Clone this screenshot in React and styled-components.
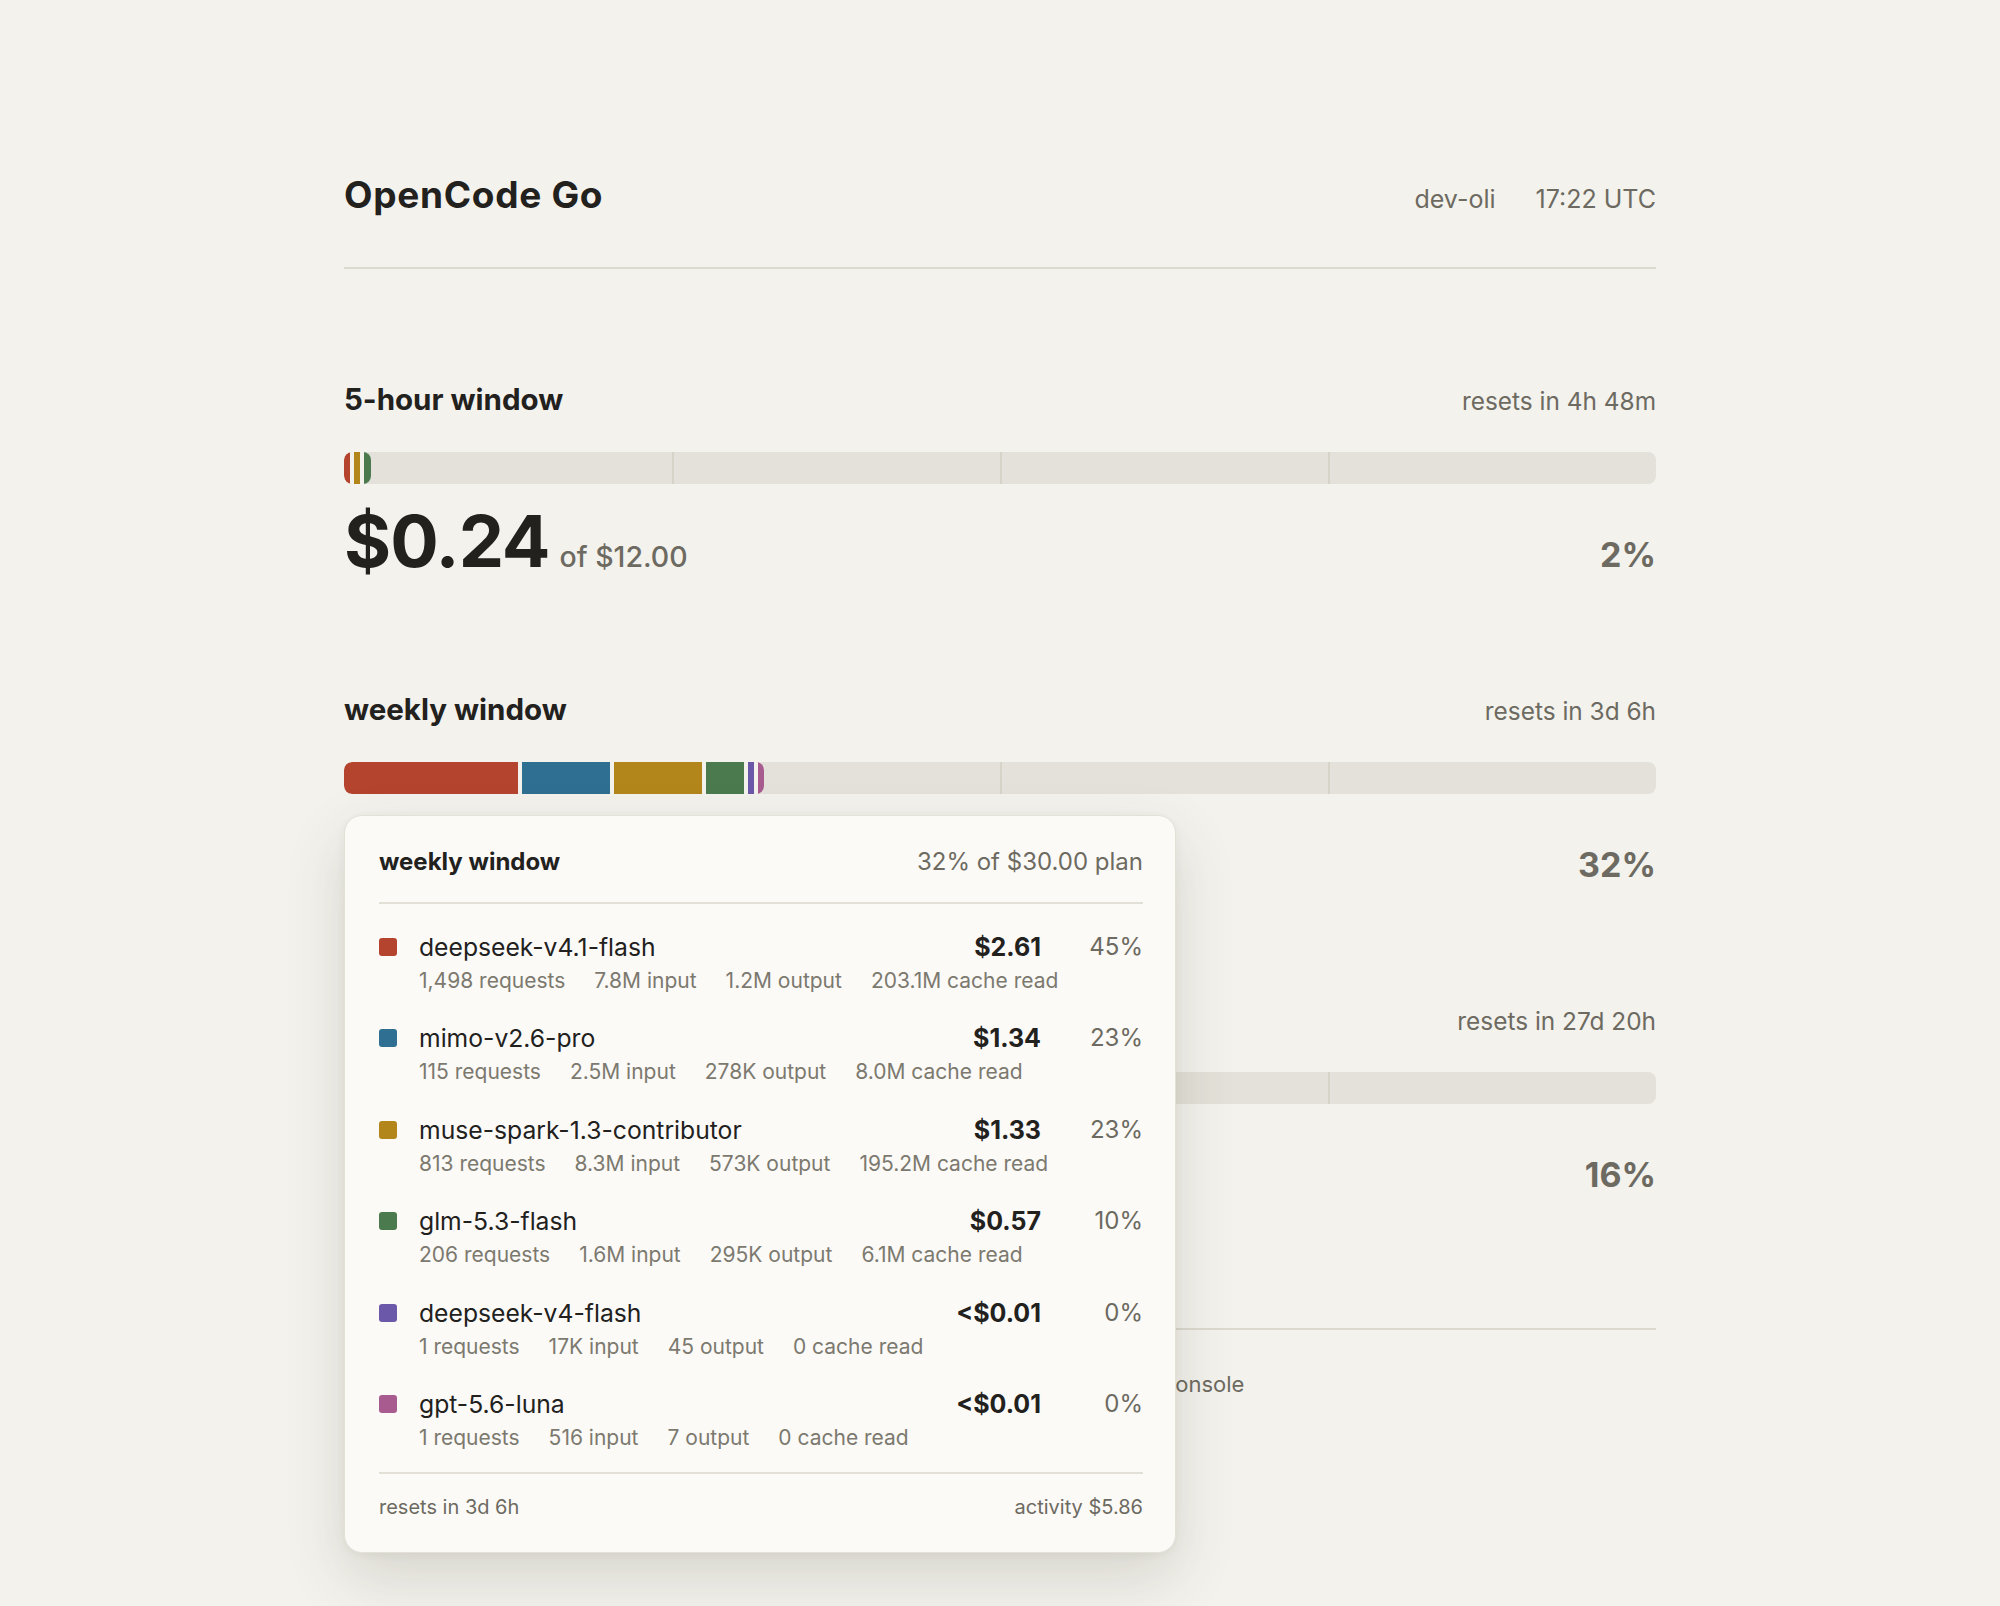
import React from 'react';
import styled, { createGlobalStyle } from 'styled-components';

const GlobalStyle = createGlobalStyle`
  html, body {
    margin: 0;
    padding: 0;
    background: #f3f2ed;
  }
  body {
    font-family: Inter, "Noto Sans", "Liberation Sans", sans-serif;
    color: #22211d;
  }
  * {
    box-sizing: border-box;
  }
`;

const Page = styled.div`
  width: 1312px;
  min-height: 1606px;
  margin: 0 auto;
  padding-top: 174px;
  padding-bottom: 240px;
`;

const Header = styled.header`
  display: flex;
  align-items: baseline;
  justify-content: space-between;
  padding-bottom: 52px;
  border-bottom: 2px solid #dcd9d0;
`;

const Brand = styled.h1`
  margin: 0;
  font-size: 37px;
  line-height: 41px;
  font-weight: 700;
  letter-spacing: 0.7px;
`;

const Meta = styled.div`
  display: flex;
  gap: 40px;
  font-size: 25px;
  color: #6d6a61;
`;

const Section = styled.section`
  margin-top: ${(p) => (p.$first ? '113px' : '115px')};
`;

const SectionHead = styled.div`
  display: flex;
  align-items: baseline;
  justify-content: space-between;
`;

const SectionTitle = styled.h2`
  margin: 0;
  font-size: 29.5px;
  line-height: 34px;
  font-weight: 700;
`;

const Resets = styled.span`
  font-size: 24.4px;
  color: #6d6a61;
`;

const BarWrap = styled.div`
  position: relative;
  margin-top: 36px;
`;

const Track = styled.div`
  position: relative;
  height: 32px;
  border-radius: 8px;
  background: #e3e1d9;
  overflow: hidden;
`;

const Tick = styled.div`
  position: absolute;
  top: 0;
  bottom: 0;
  width: 2px;
  background: #d6d3c9;
  left: ${(p) => p.$at}%;
`;

const Fill = styled.div`
  position: relative;
  z-index: 1;
  display: flex;
  gap: 4px;
  height: 100%;
  width: fit-content;
  background: #f3f2ed;
  border-radius: 8px;
  overflow: hidden;
`;

const Segment = styled.div`
  height: 100%;
  flex: none;
  background: ${(p) => p.$color};
`;

const AmountRow = styled.div`
  display: flex;
  align-items: baseline;
  margin-top: 21px;
`;

const Amount = styled.span`
  font-size: 72px;
  line-height: 72px;
  font-weight: 700;
  letter-spacing: -1px;
`;

const Of = styled.span`
  margin-left: 10px;
  font-size: 28.5px;
  font-weight: 500;
  color: #6d6a61;
`;

const Percent = styled.span`
  margin-left: auto;
  font-size: 34px;
  font-weight: 700;
  color: #6d6a61;
`;

const Footer = styled.footer`
  margin-top: 131px;
  padding-top: 41px;
  border-top: 2px solid #dcd9d0;
  display: flex;
  gap: 37px;
  font-size: 22px;
  color: #6d6a61;
`;

const Popover = styled.div`
  position: absolute;
  z-index: 10;
  top: calc(100% + 21px);
  left: 0;
  width: 832px;
  padding: 32px 32px 33px 34px;
  background: #fbfaf7;
  border: 1px solid #e4e1d8;
  border-radius: 18px;
  box-shadow: 0 24px 60px rgba(70, 60, 40, 0.16), 0 2px 8px rgba(70, 60, 40, 0.06);
`;

const PopHead = styled.div`
  display: flex;
  align-items: baseline;
  justify-content: space-between;
  padding-bottom: 26px;
  border-bottom: 2px solid #e3e0d7;
  font-size: 24px;
  line-height: 28px;
`;

const PopTitle = styled.span`
  font-weight: 700;
`;

const PopPlan = styled.span`
  color: #6d6a61;
`;

const List = styled.div`
  display: flex;
  flex-direction: column;
  gap: 29.4px;
  padding: 28px 0 21px;
`;

const Row = styled.div`
  display: grid;
  grid-template-columns: 18px 1fr auto 80px;
  column-gap: 22px;
  row-gap: 6px;
  align-items: center;
`;

const Swatch = styled.span`
  width: 18px;
  height: 18px;
  border-radius: 3px;
  background: ${(p) => p.$color};
`;

const Model = styled.span`
  font-size: 24.7px;
  line-height: 30px;
  color: #22211d;
`;

const Cost = styled.span`
  font-size: 25px;
  line-height: 30px;
  font-weight: 700;
  text-align: right;
`;

const Share = styled.span`
  font-size: 24px;
  line-height: 30px;
  color: #6d6a61;
  text-align: right;
`;

const Stats = styled.div`
  grid-column: 2 / -1;
  display: flex;
  gap: 29px;
  font-size: 21px;
  line-height: 26px;
  color: #7c796f;
`;

const PopFoot = styled.div`
  display: flex;
  justify-content: space-between;
  padding-top: 21px;
  border-top: 2px solid #e3e0d7;
  font-size: 20px;
  line-height: 24px;
  color: #6d6a61;
`;

const colors = {
  red: '#b5442f',
  blue: '#2f7092',
  ochre: '#b3861c',
  green: '#4b7a4e',
  purple: '#6c58a8',
  pink: '#a85b8e',
};

const models = [
  { name: 'deepseek-v4.1-flash', color: colors.red, cost: '$2.61', share: '45%', stats: ['1,498 requests', '7.8M input', '1.2M output', '203.1M cache read'] },
  { name: 'mimo-v2.6-pro', color: colors.blue, cost: '$1.34', share: '23%', stats: ['115 requests', '2.5M input', '278K output', '8.0M cache read'] },
  { name: 'muse-spark-1.3-contributor', color: colors.ochre, cost: '$1.33', share: '23%', stats: ['813 requests', '8.3M input', '573K output', '195.2M cache read'] },
  { name: 'glm-5.3-flash', color: colors.green, cost: '$0.57', share: '10%', stats: ['206 requests', '1.6M input', '295K output', '6.1M cache read'] },
  { name: 'deepseek-v4-flash', color: colors.purple, cost: '<$0.01', share: '0%', stats: ['1 requests', '17K input', '45 output', '0 cache read'] },
  { name: 'gpt-5.6-luna', color: colors.pink, cost: '<$0.01', share: '0%', stats: ['1 requests', '516 input', '7 output', '0 cache read'] },
];

const windows = [
  {
    title: '5-hour window',
    resets: 'resets in 4h 48m',
    amount: '$0.24',
    limit: '$12.00',
    percent: '2%',
    segments: [
      { color: colors.red, w: 6 },
      { color: colors.ochre, w: 6 },
      { color: colors.green, w: 7 },
    ],
  },
  {
    title: 'weekly window',
    resets: 'resets in 3d 6h',
    amount: '$9.60',
    limit: '$30.00',
    percent: '32%',
    popover: true,
    segments: [
      { color: colors.red, w: 174 },
      { color: colors.blue, w: 88 },
      { color: colors.ochre, w: 88 },
      { color: colors.green, w: 38 },
      { color: colors.purple, w: 6 },
      { color: colors.pink, w: 6 },
    ],
  },
  {
    title: 'monthly window',
    resets: 'resets in 27d 20h',
    amount: '$9.60',
    limit: '$60.00',
    percent: '16%',
    segments: [
      { color: colors.red, w: 86 },
      { color: colors.blue, w: 44 },
      { color: colors.ochre, w: 44 },
      { color: colors.green, w: 20 },
      { color: colors.purple, w: 4 },
      { color: colors.pink, w: 3 },
    ],
  },
];

function UsagePopover() {
  return (
    <Popover>
      <PopHead>
        <PopTitle>weekly window</PopTitle>
        <PopPlan>32% of $30.00 plan</PopPlan>
      </PopHead>
      <List>
        {models.map((m) => (
          <Row key={m.name}>
            <Swatch $color={m.color} />
            <Model>{m.name}</Model>
            <Cost>{m.cost}</Cost>
            <Share>{m.share}</Share>
            <Stats>
              {m.stats.map((s) => (
                <span key={s}>{s}</span>
              ))}
            </Stats>
          </Row>
        ))}
      </List>
      <PopFoot>
        <span>resets in 3d 6h</span>
        <span>activity $5.86</span>
      </PopFoot>
    </Popover>
  );
}

function UsageWindow({ data, first }) {
  return (
    <Section $first={first}>
      <SectionHead>
        <SectionTitle>{data.title}</SectionTitle>
        <Resets>{data.resets}</Resets>
      </SectionHead>
      <BarWrap>
        <Track>
          <Tick $at={25} />
          <Tick $at={50} />
          <Tick $at={75} />
          <Fill>
            {data.segments.map((s, i) => (
              <Segment key={i} $color={s.color} style={{ width: s.w }} />
            ))}
          </Fill>
        </Track>
        {data.popover && <UsagePopover />}
      </BarWrap>
      <AmountRow>
        <Amount>{data.amount}</Amount>
        <Of>of {data.limit}</Of>
        <Percent>{data.percent}</Percent>
      </AmountRow>
    </Section>
  );
}

function App() {
  return (
    <>
      <GlobalStyle />
      <Page>
        <Header>
          <Brand>OpenCode Go</Brand>
          <Meta>
            <span>dev-oli</span>
            <span>17:22 UTC</span>
          </Meta>
        </Header>
        {windows.map((w, i) => (
          <UsageWindow key={w.title} data={w} first={i === 0} />
        ))}
        <Footer>
          <span>updated 17:22 UTC</span>
          <span>refreshes every 60s</span>
          <span>manage billing in the OpenCode console</span>
        </Footer>
      </Page>
    </>
  );
}

export default App;
